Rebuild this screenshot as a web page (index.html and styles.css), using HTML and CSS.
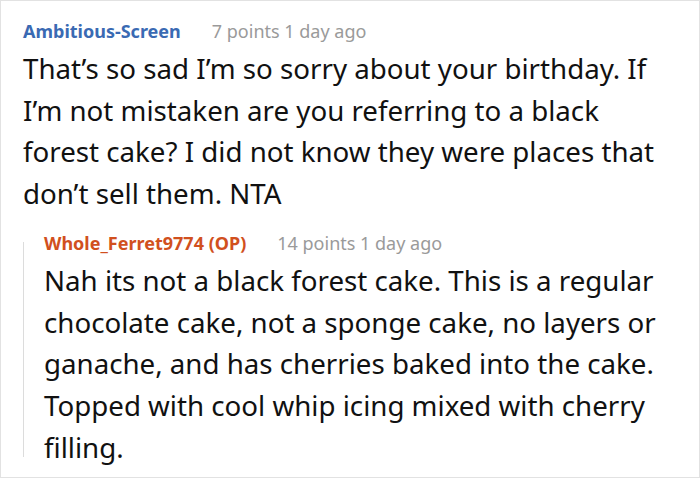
FILE: index.html
```html
<!DOCTYPE html>
<html>
<head>
<meta charset="utf-8">
<link rel="stylesheet" href="styles.css">
</head>
<body>
<div class="frame">
  <div class="comment">
    <div class="meta">
      <span class="author">Ambitious-Screen</span>
      <span class="info">7 points 1 day ago</span>
    </div>
    <p class="text">That’s so sad I’m so sorry about your birthday. If I’m not mistaken are you referring to a black forest cake? I did not know they were places that don’t sell them. NTA</p>
    <div class="reply">
      <div class="meta">
        <span class="author op">Whole_Ferret9774 (OP)</span>
        <span class="info">14 points 1 day ago</span>
      </div>
      <p class="text">Nah its not a black forest cake. This is a regular chocolate cake, not a sponge cake, no layers or ganache, and has cherries baked into the cake. Topped with cool whip icing mixed with cherry filling.</p>
    </div>
  </div>
</div>
</body>
</html>
```

FILE: styles.css
```css
html, body {
  margin: 0;
  padding: 0;
  background: #fff;
}
.frame {
  width: 700px;
  height: 478px;
  box-sizing: border-box;
  border: 1px solid #e2e2e2;
  font-family: "Noto Sans", "Open Sans", sans-serif;
  overflow: hidden;
}
.comment {
  padding: 17px 22px 0 22px;
}
.meta {
  display: flex;
  gap: 31px;
  font-size: 18px;
  line-height: 26px;
}
.author {
  font-weight: bold;
  color: #3a6ab3;
}
.author.op {
  color: #d1501e;
}
.info {
  color: #9a9a9a;
}
.text {
  margin: 4px 0 0 0;
  font-size: 27.7px;
  line-height: 41.7px;
  color: #111;
}
.reply {
  position: relative;
  margin-top: 15px;
  padding-left: 21px;
}
.reply::before {
  content: "";
  position: absolute;
  left: 0;
  top: 12px;
  bottom: 11px;
  width: 1px;
  background: #dcdcdc;
}
```
